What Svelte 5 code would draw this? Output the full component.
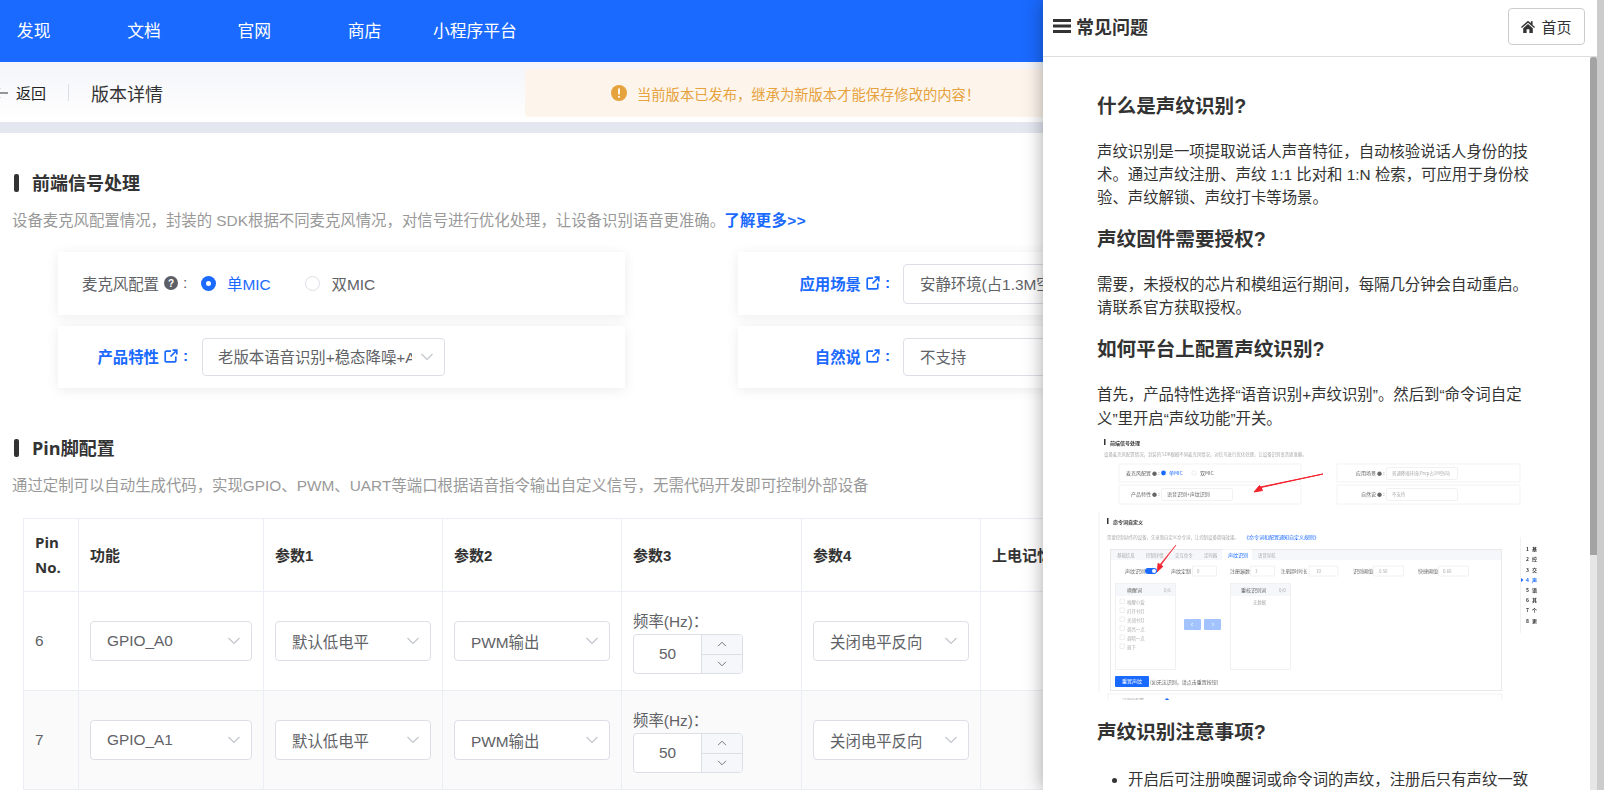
<script>
  const rows = [
    { pin: '6', fn: 'GPIO_A0' },
    { pin: '7', fn: 'GPIO_A1' }
  ];
  const heads = ['功能', '参数1', '参数2', '参数3', '参数4', '上电记忆'];
  const navItems = ['发现', '文档', '官网', '商店', '小程序平台'];
  const miniTabs = [['基础信息', 1117], ['控制详情', 1146], ['交互命令', 1175], ['定时器', 1204], ['语音导航', 1258]];
  const miniList = [['喚醒小爱', 600], ['打开书灯', 609], ['关闭书灯', 618], ['调亮一点', 627], ['调暗一点', 636], ['退下', 645]];
  const miniSide = [['1', '基', 547], ['2', '控', 557], ['3', '交', 568], ['4', '声', 578], ['5', '语', 588], ['6', '其', 598], ['7', '个', 608], ['8', '更', 619]];
</script>

{#snippet chevron()}
  <svg class="chev" viewBox="0 0 14 8" width="14" height="8"><path d="M1.5 1 7 6.5 12.5 1" /></svg>
{/snippet}

{#snippet ext()}
  <svg class="ext" viewBox="0 0 14 14" width="14" height="14">
    <path d="M7 2.2H2.2a1 1 0 0 0-1 1v8.6a1 1 0 0 0 1 1h8.6a1 1 0 0 0 1-1V7.5" />
    <path d="M6.5 7.5 12.4 1.6M8.6 1.2h4.2v4.2" />
  </svg>
{/snippet}

{#snippet select(text, cls)}
  <div class="select {cls}"><span class="select-text">{text}</span>{@render chevron()}</div>
{/snippet}

<div class="page">
  <main class="main">
    <header class="nav">
      {#each navItems as item}<span class="nav-item">{item}</span>{/each}
    </header>

    <div class="sub">
      <svg class="back" viewBox="0 0 14 12" width="14" height="12"><path d="M14 6H1M6 1 1 6l5 5" /></svg>
      <span class="back-text">返回</span>
      <span class="divider"></span>
      <span class="sub-title">版本详情</span>
      <div class="notice">
        <svg viewBox="0 0 16 16" width="16" height="16"><circle cx="8" cy="8" r="8" fill="#e6a23c" /><rect x="7.1" y="3.2" width="1.8" height="6.4" rx=".9" fill="#fff" /><circle cx="8" cy="11.8" r="1.1" fill="#fff" /></svg>
        <span class="notice-text">当前版本已发布，继承为新版本才能保存修改的内容！</span>
      </div>
    </div>
    <div class="band"></div>

    <h3 class="sec sec-first">前端信号处理</h3>
    <p class="desc desc-first">设备麦克风配置情况，封装的 SDK根据不同麦克风情况，对信号进行优化处理，让设备识别语音更准确。<b class="more">了解更多&gt;&gt;</b></p>

    <div class="cards">
      <div class="card card-a">
        <div class="label plain">麦克风配置
          <svg class="help" viewBox="0 0 14 14" width="14" height="14"><circle cx="7" cy="7" r="7" fill="#5c5f66" /><text x="7" y="10.6" text-anchor="middle" font-size="10" font-weight="700" fill="#fff">?</text></svg>
          <span class="colon">:</span>
        </div>
        <span class="radio on"></span><span class="radio-text blue">单MIC</span>
        <span class="radio off"></span><span class="radio-text second">双MIC</span>
      </div>
      <div class="card card-a">
        <div class="label link wide">应用场景 {@render ext()}<span class="colon">:</span></div>
        {@render select('安静环境(占1.3M空间)', 'sel-scene')}
      </div>
      <div class="card card-b">
        <div class="label link">产品特性 {@render ext()}<span class="colon">:</span></div>
        {@render select('老版本语音识别+稳态降噪+AEC', 'sel-prod')}
      </div>
      <div class="card card-b">
        <div class="label link wide">自然说 {@render ext()}<span class="colon">:</span></div>
        {@render select('不支持', 'sel-scene')}
      </div>
    </div>

    <h3 class="sec sec-second">Pin脚配置</h3>
    <p class="desc desc-second">通过定制可以自动生成代码，实现GPIO、PWM、UART等端口根据语音指令输出自定义信号，无需代码开发即可控制外部设备</p>

    <table class="tbl">
      <colgroup>
        <col class="c0" /><col class="c1" /><col class="c2" /><col class="c3" /><col class="c4" /><col class="c5" /><col class="c6" />
      </colgroup>
      <thead>
        <tr>
          <th class="pin-head">Pin<br />No.</th>
          {#each heads as h}<th>{h}</th>{/each}
        </tr>
      </thead>
      <tbody>
        {#each rows as r, i}
          <tr class:alt={i === 1}>
            <td>{r.pin}</td>
            <td>{@render select(r.fn, '')}</td>
            <td>{@render select('默认低电平', '')}</td>
            <td>{@render select('PWM输出', '')}</td>
            <td>
              <div class="freq">
                <div class="freq-label">频率(Hz)：</div>
                <div class="num">
                  <span class="num-val">50</span>
                  <span class="num-btns">
                    <span class="num-btn"><svg viewBox="0 0 14 8" width="10" height="6"><path d="M1.5 7 7 1.5 12.5 7" /></svg></span>
                    <span class="num-btn"><svg viewBox="0 0 14 8" width="10" height="6"><path d="M1.5 1 7 6.5 12.5 1" /></svg></span>
                  </span>
                </div>
              </div>
            </td>
            <td>{@render select('关闭电平反向', '')}</td>
            <td></td>
          </tr>
        {/each}
      </tbody>
    </table>
  </main>

  <aside class="panel">
    <div class="panel-head">
      <svg class="burger" viewBox="0 0 18 14" width="18" height="14"><path d="M0 0h18v3H0zM0 5.5h18v3H0zM0 11h18v3H0z" fill="#333" /></svg>
      <span class="panel-title">常见问题</span>
      <span class="home-btn">
        <svg viewBox="0 0 14 13" width="14" height="13"><path d="M7 .8 0 7l.9 1L7 2.7 13.100 8l.9-1-2.400-2.100V1.300h-1.800v2L7 .8Z M2.200 8.200 7 4l4.800 4.200V13H8.400V9.300H5.600V13H2.200Z" fill="#333" /></svg>
        首页
      </span>
    </div>
    <div class="panel-body">
      <div class="doc">
        <h2 class="first">什么是声纹识别?</h2>
        <p>声纹识别是一项提取说话人声音特征，自动核验说话人身份的技术。通过声纹注册、声纹 1:1 比对和 1:N 检索，可应用于身份校验、声纹解锁、声纹打卡等场景。</p>
        <h2>声纹固件需要授权?</h2>
        <p>需要，未授权的芯片和模组运行期间，每隔几分钟会自动重启。请联系官方获取授权。</p>
        <h2>如何平台上配置声纹识别?</h2>
        <p>首先，产品特性选择“语音识别+声纹识别”。然后到“命令词自定义”里开启“声纹功能”开关。</p>
        <svg class="mini" viewBox="1097 430 433 269" width="433" height="269">
          <defs><clipPath id="mini-clip"><rect x="1097" y="430" width="445" height="268" /></clipPath></defs>
          <rect x="1104" y="437" width="1.500" height="6" fill="#333" />
          <text x="1110" y="443" class="mt b">前端信号处理</text>
          <text x="1104" y="454" class="mt g">设备麦克风配置情况，封装的 SDK根据不同麦克风情况，对信号进行优化处理，让设备识别语音更准确。</text>
          <rect x="1119" y="462" width="182" height="18" class="mc" />
          <rect x="1119" y="483" width="182" height="19" class="mc" />
          <rect x="1337" y="462" width="183" height="18" class="mc" />
          <rect x="1337" y="483" width="183" height="19" class="mc" />
          <text x="1126" y="473" class="mt">麦克风配置 ● :</text>
          <circle cx="1163.500" cy="471" r="2.400" fill="#1a6aff" />
          <text x="1169" y="473" class="mt bl">单MIC</text>
          <circle cx="1194" cy="471" r="2.200" fill="none" stroke="#ddd" stroke-width=".5" />
          <text x="1200" y="473" class="mt">双MIC</text>
          <text x="1131" y="494" class="mt">产品特性 ● :</text>
          <rect x="1161.500" y="486.500" width="71" height="12" rx="1.500" class="ms" />
          <text x="1167" y="494" class="mt">语音识别+声纹识别</text>
          <text x="1356" y="473" class="mt">应用场景 ● :</text>
          <rect x="1386.500" y="465.500" width="71" height="12" rx="1.500" class="ms" />
          <text x="1392" y="473" class="mt g">普通降噪环境(Prep占1M空间)</text>
          <text x="1361" y="494" class="mt">自然说 ● :</text>
          <rect x="1386.500" y="486.500" width="71" height="12" rx="1.500" class="ms" />
          <text x="1392" y="494" class="mt g">不支持</text>
          <path d="M1323 472 1261 485.500 1262.500 488.500 1254 490 1259.500 483.500 1260.500 485Z" fill="#f5222d" stroke="#f5222d" stroke-width="1" />

          <rect x="1098.500" y="510" width="1" height="180" fill="#f2f2f2" />
          <rect x="1107" y="516" width="1.500" height="6" fill="#333" />
          <text x="1113" y="522" class="mt b">命令词自定义</text>
          <text x="1107" y="537" class="mt g">需要控制动作的设备，先录制自定义命令词，让控制设备增强效果。</text>
          <text x="1244" y="537" class="mt bl">《命令词和配置通知自定义规则》</text>

          <rect x="1110.500" y="547.500" width="391" height="141" fill="#fff" stroke="#e4e4e4" stroke-width=".8" />
          <rect x="1111" y="548" width="390" height="10" fill="#f5f7fa" />
          <rect x="1222" y="547.500" width="30" height="11" fill="#fff" />
          {#each miniTabs as [t, x]}<text {x} y="555" class="mt g">{t}</text>{/each}
          <text x="1228" y="555" class="mt bl">声纹识别</text>
          <path d="M1176 543 1161 563 1163 564.500 1157 570 1158 561 1160 562.500Z" fill="#f5222d" stroke="#f5222d" stroke-width=".6" />

          <text x="1125" y="571" class="mt">声纹识别</text>
          <rect x="1145" y="566" width="12" height="6" rx="3" fill="#1a6aff" />
          <circle cx="1154" cy="569" r="2" fill="#fff" />
          <text x="1171" y="571" class="mt">声纹定制</text>
          <rect x="1192.500" y="564" width="24" height="10" rx="1" class="ms" />
          <text x="1197" y="571" class="mt g">0</text>
          <text x="1230" y="571" class="mt">注册遍数</text>
          <rect x="1250.500" y="564" width="24" height="10" rx="1" class="ms" />
          <text x="1255" y="571" class="mt g">3</text>
          <text x="1281" y="571" class="mt small">注册超时时长</text>
          <rect x="1309" y="564" width="29" height="10" rx="1" class="ms" />
          <text x="1316" y="571" class="mt g">10</text>
          <text x="1353" y="571" class="mt">识别阈值</text>
          <rect x="1373.500" y="564" width="30" height="10" rx="1" class="ms" />
          <text x="1379" y="571" class="mt g">0.50</text>
          <text x="1418" y="571" class="mt">快捷阈值</text>
          <rect x="1438.500" y="564" width="30" height="10" rx="1" class="ms" />
          <text x="1443" y="571" class="mt g">0.60</text>

          <rect x="1115.500" y="581.500" width="60" height="86" class="ms" />
          <rect x="1116" y="582" width="59" height="12" fill="#f5f7fa" />
          <text x="1127" y="590" class="mt">唤醒词</text>
          <text x="1164" y="590" class="mt g">0/6</text>
          <rect x="1230.500" y="581.500" width="60" height="86" class="ms" />
          <rect x="1231" y="582" width="59" height="12" fill="#f5f7fa" />
          <text x="1241" y="590" class="mt">重校识别词</text>
          <text x="1279" y="590" class="mt g">0/0</text>
          <text x="1253" y="602" class="mt g">无数据</text>
          {#each miniList as [t, y]}
            <rect x="1120" y={y - 3} width="4.500" height="4.500" fill="none" stroke="#ddd" stroke-width=".5" />
            <text x="1127" y={y + 2} class="mt g">{t}</text>
          {/each}
          <rect x="1184" y="617" width="17" height="11" rx="1" fill="#a3c3ff" />
          <rect x="1204" y="617" width="17" height="11" rx="1" fill="#a3c3ff" />
          <path d="M1193 621 1191 622.500 1193 624M1212 621 1214 622.500 1212 624" fill="none" stroke="#fff" stroke-width=".6" />
          <rect x="1115" y="674" width="34" height="11" rx="1" fill="#1a6aff" />
          <text x="1122" y="681" class="mt wh">重置声纹</text>
          <text x="1150" y="681.500" class="mt">(如无法识别，请点击重置按钮)</text>

          <g clip-path="url(#mini-clip)">
            <rect x="1108" y="692" width="394" height="12" fill="#fff" stroke="#f0f0f0" stroke-width=".8" />
            <text x="1122" y="700" class="mt g">可视化配置</text>
            <circle cx="1167" cy="698" r="1.800" fill="#1a6aff" />
          </g>

          <rect x="1520" y="535" width=".6" height="96" fill="#e8e8e8" />
          {#each miniSide as [n, t, y]}
            <text x="1526" y={y + 2} class="mt b {n === '4' ? 'bl' : ''}">{n}</text>
            <text x="1532" y={y + 2} class="mt b {n === '4' ? 'bl' : ''}">{t}</text>
          {/each}
          <path d="M1521 576v4l2.500-2z" fill="#1a6aff" />
        </svg>
        <h2 class="after-img">声纹识别注意事项?</h2>
        <ul><li>开启后可注册唤醒词或命令词的声纹，注册后只有声纹一致的人才可唤醒设备。</li></ul>
      </div>
      <div class="inner-bar"><span class="thumb"></span></div>
    </div>
  </aside>
  <div class="outer-bar"></div>
</div>

<style>
  :global(body) { margin: 0; overflow: hidden; background: #fff; }
  .page {
    position: relative; width: 1604px; height: 790px; overflow: hidden;
    font-family: "Liberation Sans", "Noto Sans CJK SC", sans-serif; color: #333;
  }
  .main { width: 1604px; height: 790px; overflow: hidden; }

  .nav { height: 62px; background: #1a6aff; display: flex; align-items: center; margin-left: -21.5px; padding-bottom: 2px; box-sizing: border-box; }
  .nav-item { width: 110.3px; flex: none; text-align: center; color: #fff; font-size: 16.800px; }

  .sub { height: 60px; box-sizing: border-box; padding-top: 1px; display: flex; align-items: center; background: linear-gradient(#f4f5f9, #fff); }
  .back { margin-left: -6px; flex: none; fill: none; stroke: #333; stroke-width: 1.200; }
  .back-text { margin-left: 8px; font-size: 15px; color: #222; }
  .divider { width: 1px; height: 17px; background: #dcdfe6; margin-left: 22px; }
  .sub-title { margin-left: 22px; font-size: 18px; color: #333; }
  .notice {
    position: absolute; left: 525px; top: 69px; width: 600px; height: 48px; box-sizing: border-box;
    padding-left: 86px; background: #fdf5ec; border-radius: 4px; display: flex; align-items: center; gap: 10px;
    font-size: 14.300px; color: #e6a23c;
  }
  .notice-text { padding-top: 1px; }

  .band { height: 11px; background: #e4e7f0; }

  .sec { position: relative; margin: 0 0 0 32px; font-size: 18px; line-height: 24px; font-weight: 700; color: #333; font-family: "Open Sans", "Noto Sans CJK SC", sans-serif; }
  .sec::before { content: ""; position: absolute; left: -18px; top: 3px; width: 5px; height: 18px; border-radius: 2px; background: #333; }
  .sec-first { margin-top: 38px; }
  .sec-second { margin-top: 48px; }
  .desc { margin: 0 0 0 12px; font-size: 15.400px; line-height: 22px; color: #999; white-space: nowrap; }
  .desc-first { margin-top: 15px; }
  .desc-second { margin-top: 15px; }
  .more { color: #1a6aff; font-weight: 700; margin-left: -1px; letter-spacing: .4px; }

  .cards { display: grid; grid-template-columns: 567px 567px; grid-template-rows: 63px 62px; column-gap: 113px; row-gap: 11px; margin: 20px 0 0 58px; }
  .card { background: #fff; box-shadow: 0 2px 12px rgba(0, 0, 0, .08); display: flex; align-items: center; font-size: 15.400px; }
  .label { width: 132px; flex: none; display: flex; align-items: center; justify-content: flex-end; white-space: nowrap; gap: 5px; padding-bottom: 2px; box-sizing: content-box; }
  .label.plain { color: #606266; width: 129px; }
  .label.wide { width: 154px; }
  .label.plain + .radio { margin-left: 14px; }
  .label.link { color: #1a6aff; font-weight: 700; }
  .colon { width: 7px; font-weight: 700; }
  .plain .colon { width: 4px; font-weight: 400; }
  .help { flex: none; }
  .help text { font-family: "Liberation Sans", sans-serif; }
  .ext { flex: none; fill: none; stroke: #1a6aff; stroke-width: 1.700; }

  .radio { width: 15px; height: 15px; box-sizing: border-box; border-radius: 50%; flex: none; }
  .radio.on { background: #1a6aff; position: relative; }
  .radio.on::after { content: ""; position: absolute; left: 5px; top: 5px; width: 5px; height: 5px; background: #fff; border-radius: 50%; }
  .radio.off { border: 1px solid #dcdfe6; margin-left: 34px; }
  .radio-text { margin-left: 11px; color: #606266; font-size: 15.400px; padding-bottom: 2px; }
  .radio-text.blue { color: #1a6aff; }
  .radio-text.second { margin-left: 12px; }

  .select {
    height: 40px; box-sizing: border-box; border: 1px solid #dcdfe6; border-radius: 4px; background: #fff;
    display: flex; align-items: center; padding: 0 10px 0 16px; gap: 8px; font-size: 15.400px; color: #606266;
  }
  .select-text { flex: 1; min-width: 0; overflow: hidden; white-space: nowrap; }
  .card .select-text { padding-bottom: 2px; }
  .chev { flex: none; fill: none; stroke: #c0c4cc; stroke-width: 1.100; }
  .sel-prod { width: 243px; height: 38px; margin-left: 12px; padding-left: 15px; }
  .sel-scene { width: 300px; margin-left: 11px; }
  .card-b .sel-scene { height: 38px; }

  .tbl { border-collapse: collapse; table-layout: fixed; width: 1505px; margin: 21px 0 0 23px; font-size: 15.400px; color: #606266; }
  .c0 { width: 55px; } .c1 { width: 185px; } .c2 { width: 179px; } .c3 { width: 179px; } .c4 { width: 180px; } .c5 { width: 179px; } .c6 { width: 548px; }
  th, td { border: 1px solid #ebeef5; padding: 0 11px; text-align: left; vertical-align: middle; }
  th { height: 72px; font-weight: 700; color: #333; font-size: 15px; line-height: 25px; white-space: nowrap; }
  .pin-head { font-family: "Open Sans", sans-serif; }
  td { height: 98px; background: #fff; }
  tr.alt td { background: #fafafa; }
  .freq { padding-top: 2px; }
  .freq-label { line-height: 24px; }
  .num { width: 110px; height: 40px; box-sizing: border-box; border: 1px solid #dcdfe6; border-radius: 4px; background: #fff; display: flex; overflow: hidden; }
  .num-val { flex: 1; text-align: center; line-height: 38px; }
  .num-btns { width: 40px; flex: none; border-left: 1px solid #dcdfe6; display: flex; flex-direction: column; }
  .num-btn { flex: 1; background: #f5f7fa; display: flex; align-items: center; justify-content: center; }
  .num-btn + .num-btn { border-top: 1px solid #dcdfe6; }
  .num-btn svg { fill: none; stroke: #606266; stroke-width: 1.200; }

  .panel {
    position: absolute; left: 1043px; top: 0; width: 554px; height: 790px; background: #fff;
    box-shadow: 0 0 18px rgba(0, 0, 0, .35); display: flex; flex-direction: column; z-index: 2;
  }
  .panel-head { height: 57px; flex: none; box-sizing: border-box; border-bottom: 1px solid #ddd; display: flex; align-items: center; padding: 0 12px 4px 10px; }
  .burger { flex: none; }
  .panel-title { margin-left: 5px; font-size: 18px; font-weight: 700; color: #333; flex: 1; }
  .home-btn {
    width: 77px; height: 37px; box-sizing: border-box; border: 1px solid #ccc; border-radius: 4px;
    display: flex; align-items: center; justify-content: center; gap: 6px; font-size: 15px; color: #333;
  }
  .panel-body { flex: 1; min-height: 0; position: relative; display: flex; overflow: hidden; }
  .doc { flex: 1; min-width: 0; padding: 0 61px 0 54px; font-size: 15.400px; line-height: 23.100px; color: #333; }
  .doc h2 { margin: 16px 0 19px; font-size: 19.600px; line-height: 29px; font-weight: 700; color: #333; }
  .doc h2.first { margin-top: 35px; }
  .doc h2.after-img { margin: 17px 0 21px; }
  .doc p { margin: 0; }
  .doc ul { margin: 0; padding: 0 0 0 31px; }
  .mini { display: block; margin-top: 2px; overflow: visible; filter: blur(.35px); }
  .mc { fill: #fff; stroke: #f1f1f1; stroke-width: .8; }
  .ms { fill: #fff; stroke: #e8e8e8; stroke-width: .6; }
  .mt { font-size: 5px; fill: #666; font-family: "Noto Sans CJK SC", sans-serif; }
  .mt.small { font-size: 4.400px; }
  .mt.b { font-weight: 700; fill: #333; }
  .mt.g { font-size: 4.400px; fill: #aaa; }
  .mt.bl { fill: #1a6aff; }
  .mt.wh { fill: #fff; }
  .inner-bar { position: absolute; right: 0; top: 0; bottom: 0; width: 7px; background: #e6e6e6; }
  .thumb { display: block; height: 498px; background: #a3a3a3; border-radius: 3px 3px 0 0; }
  .outer-bar { position: absolute; right: 0; top: 0; width: 7px; height: 790px; background: #ccc; z-index: 3; }
</style>
